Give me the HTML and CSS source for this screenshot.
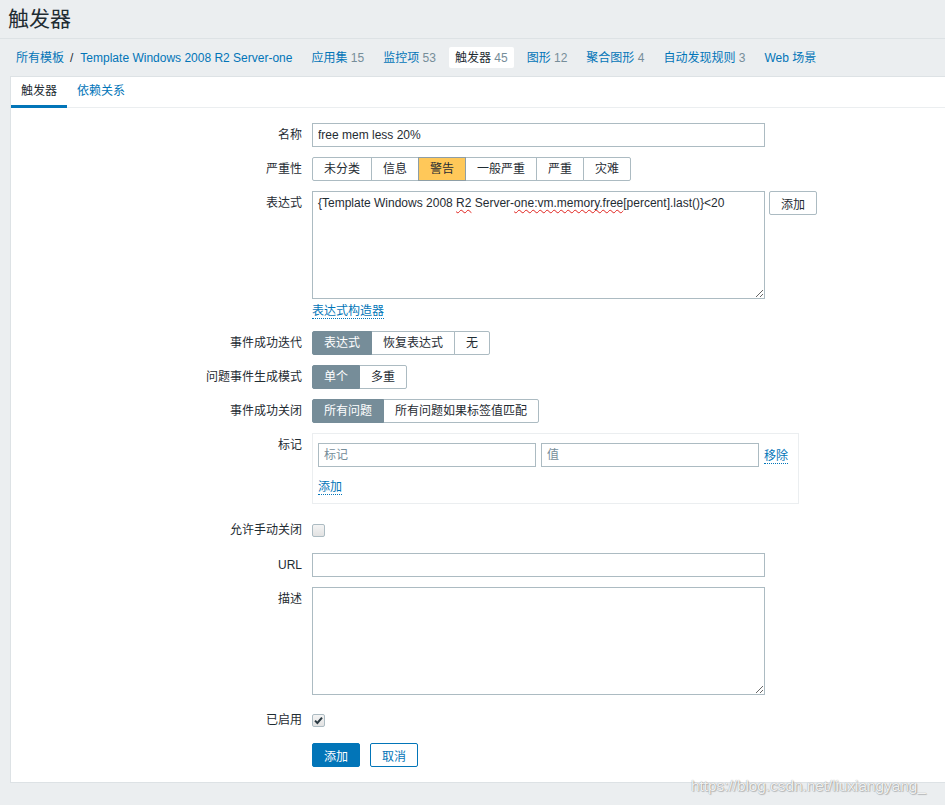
FILE: index.html
```html
<!DOCTYPE html>
<html lang="zh-CN">
<head>
<meta charset="utf-8">
<title>触发器</title>
<link rel="stylesheet" href="styles.css">
</head>
<body>
<header class="page-header"><h1>触发器</h1></header>
<nav class="object-nav">
  <ul class="nav-list">
    <li class="nav-item"><a class="lnk">所有模板</a><span class="sep">/</span><a class="lnk">Template Windows 2008 R2 Server-one</a></li>
    <li class="nav-item"><a class="lnk">应用集</a> <span class="count">15</span></li>
    <li class="nav-item"><a class="lnk">监控项</a> <span class="count">53</span></li>
    <li class="nav-item active"><span class="cur">触发器</span> <span class="count">45</span></li>
    <li class="nav-item"><a class="lnk">图形</a> <span class="count">12</span></li>
    <li class="nav-item"><a class="lnk">聚合图形</a> <span class="count">4</span></li>
    <li class="nav-item"><a class="lnk">自动发现规则</a> <span class="count">3</span></li>
    <li class="nav-item"><a class="lnk">Web 场景</a></li>
  </ul>
</nav>
<main class="panel">
  <div class="tabs">
    <a class="tab active">触发器</a>
    <a class="tab">依赖关系</a>
  </div>
  <form class="form">
    <div class="row">
      <label class="lbl">名称</label>
      <div class="ctl"><input class="field w453" type="text" value="free mem less 20%"></div>
    </div>
    <div class="row">
      <label class="lbl">严重性</label>
      <div class="ctl">
        <div class="radio-group">
          <span class="opt">未分类</span><span class="opt">信息</span><span class="opt warn">警告</span><span class="opt">一般严重</span><span class="opt">严重</span><span class="opt">灾难</span>
        </div>
      </div>
    </div>
    <div class="row">
      <label class="lbl">表达式</label>
      <div class="ctl">
        <div class="expr-line">
          <div class="area w453 h108 expr">{Template Windows 2008 <span class="sp">R2</span> Server-<span class="sp">one:vm.memory.free</span>[percent].last()}&lt;20</div>
          <button class="btn-alt" type="button">添加</button>
        </div>
        <div class="under-link"><a class="dlink">表达式构造器</a></div>
      </div>
    </div>
    <div class="row">
      <label class="lbl">事件成功迭代</label>
      <div class="ctl">
        <div class="radio-group"><span class="opt on">表达式</span><span class="opt">恢复表达式</span><span class="opt">无</span></div>
      </div>
    </div>
    <div class="row">
      <label class="lbl">问题事件生成模式</label>
      <div class="ctl">
        <div class="radio-group"><span class="opt on">单个</span><span class="opt">多重</span></div>
      </div>
    </div>
    <div class="row">
      <label class="lbl">事件成功关闭</label>
      <div class="ctl">
        <div class="radio-group"><span class="opt on">所有问题</span><span class="opt">所有问题如果标签值匹配</span></div>
      </div>
    </div>
    <div class="row">
      <label class="lbl">标记</label>
      <div class="ctl">
        <div class="tag-box">
          <div class="tag-row">
            <input class="field w218" type="text" placeholder="标记">
            <input class="field w218" type="text" placeholder="值">
            <a class="dlink">移除</a>
          </div>
          <div class="tag-add"><a class="dlink">添加</a></div>
        </div>
      </div>
    </div>
    <div class="row row-check">
      <label class="lbl">允许手动关闭</label>
      <div class="ctl ctl-check"><span class="chk"></span></div>
    </div>
    <div class="row">
      <label class="lbl">URL</label>
      <div class="ctl"><input class="field w453" type="text"></div>
    </div>
    <div class="row">
      <label class="lbl">描述</label>
      <div class="ctl"><textarea class="area w453 h108"></textarea></div>
    </div>
    <div class="row row-check row-enabled">
      <label class="lbl">已启用</label>
      <div class="ctl ctl-check"><span class="chk checked"><svg width="11" height="11" viewBox="0 0 11 11"><path d="M2 5.6 L4.4 8 L9 2.6" fill="none" stroke="#2b3a42" stroke-width="2"/></svg></span></div>
    </div>
    <div class="row">
      <span class="lbl"></span>
      <div class="ctl btns">
        <button class="btn-main" type="button">添加</button>
        <button class="btn-cancel" type="button">取消</button>
      </div>
    </div>
  </form>
</main>
<div class="watermark">https://blog.csdn.net/liuxiangyang_</div>
</body>
</html>
```
FILE: styles.css
```css
* { box-sizing: border-box; }
html, body {
  margin: 0;
  padding: 0;
  background: #ebeef0;
  height: 805px;
  overflow: hidden;
}
body {
  font-family: "Liberation Sans", Arial, "Noto Sans CJK SC", sans-serif;
  font-size: 12px;
  color: #1f2c33;
  position: relative;
}
.page-header {
  height: 39px;
  border-bottom: 1px solid #dde2e5;
  display: flex;
  align-items: center;
  padding-left: 8px;
}
.page-header h1 {
  margin: 0;
  font-size: 21px;
  font-weight: normal;
  line-height: 24px;
  color: #1f2c33;
}
.object-nav {
  padding: 8px 10px 8px 10px;
}
.nav-list {
  list-style: none;
  margin: 0;
  padding: 0;
  display: flex;
  gap: 7px;
}
.nav-item {
  height: 21px;
  line-height: 22px;
  padding: 0 6px;
  white-space: nowrap;
  border-radius: 2px;
}
.nav-item.active {
  background: #fff;
}
.lnk { color: #0275b8; text-decoration: none; }
.cur { color: #1f2c33; }
.count { color: #768d99; }
.sep { margin: 0 7px 0 6px; color: #1f2c33; }

.panel {
  margin-left: 10px;
  background: #fff;
  border: 1px solid #dde2e5;
  border-right: none;
}
.tabs {
  display: flex;
  border-bottom: 1px solid #ebeef0;
  height: 31px;
}
.tab {
  padding: 0 10px;
  line-height: 28px;
  height: 31px;
  border-bottom: 3px solid transparent;
  color: #0275b8;
  margin-bottom: -1px;
}
.tab.active {
  color: #1f2c33;
  border-bottom-color: #0275b8;
}

.form {
  padding: 10px 0 10px 0;
}
.row {
  display: grid;
  grid-template-columns: 291px 1fr;
  column-gap: 10px;
  padding: 5px 0;
}
.lbl {
  text-align: right;
  line-height: 24px;
  white-space: nowrap;
}
.ctl { min-width: 0; }

.field {
  height: 24px;
  border: 1px solid #acbbc2;
  padding: 0 5px;
  font: inherit;
  color: #1f2c33;
  background: #fff;
  outline: none;
  margin: 0;
  display: block;
}
.field::placeholder { color: #768d99; opacity: 1; }
.w453 { width: 453px; }
.w218 { width: 218px; }
.h108 { height: 108px; }

.area {
  border: 1px solid #acbbc2;
  padding: 3px 5px;
  font: inherit;
  line-height: 16px;
  color: #1f2c33;
  background: #fff;
  resize: both;
  overflow: auto;
  display: block;
  margin: 0;
  outline: none;
}
.expr { white-space: nowrap; }
.sp {
  text-decoration: underline wavy #e0221d;
  text-decoration-thickness: 1px;
  text-underline-offset: 2px;
  text-decoration-skip-ink: none;
}
.expr-line {
  display: flex;
  align-items: flex-start;
  gap: 4px;
}
.btn-alt {
  height: 24px;
  padding: 0 11px;
  border: 1px solid #acbbc2;
  border-radius: 2px;
  background: #fff;
  font: inherit;
  color: #1f2c33;
  margin: 0;
}
.under-link {
  margin-top: 4px;
  height: 18px;
  line-height: 16px;
}
.dlink {
  color: #0275b8;
  text-decoration: none;
  border-bottom: 1px dotted #0275b8;
}

.radio-group {
  display: inline-flex;
}
.opt {
  height: 24px;
  line-height: 22px;
  padding: 0 11px;
  border: 1px solid #acbbc2;
  margin-left: -1px;
  background: #fff;
  white-space: nowrap;
  position: relative;
}
.opt:first-child { margin-left: 0; border-radius: 2px 0 0 2px; }
.opt:last-child { border-radius: 0 2px 2px 0; }
.opt.warn {
  background: #ffc859;
  border-color: #8e9ea6;
  z-index: 1;
}
.opt.on {
  background: #768d99;
  border-color: #768d99;
  color: #fff;
  z-index: 1;
}

.tag-box {
  width: 487px;
  border: 1px solid #ebeef0;
  padding: 9px 5px 5px 5px;
  margin-bottom: 5px;
}
.tag-row {
  display: flex;
  align-items: center;
  gap: 5px;
}
.tag-add {
  margin-top: 12px;
  line-height: 16px;
  height: 19px;
}

.ctl-check {
  display: flex;
  align-items: center;
  height: 24px;
}
.row-check { padding: 4px 0 6px 0; }
.row-enabled { margin-top: 4px; }
.chk {
  width: 13px;
  height: 13px;
  border: 1px solid #acbbc2;
  border-radius: 2px;
  background: linear-gradient(#f4f4f4, #e2e2e2);
  display: flex;
  align-items: center;
  justify-content: center;
}
.chk svg { display: block; }

.btns {
  display: flex;
  gap: 10px;
}
.btn-main, .btn-cancel {
  height: 24px;
  padding: 0 11px;
  border-radius: 2px;
  font: inherit;
  margin: 0;
}
.btn-main {
  background: #0275b8;
  border: 1px solid #0275b8;
  color: #fff;
}
.btn-cancel {
  background: #fff;
  border: 1px solid #0275b8;
  color: #0275b8;
}

.watermark {
  position: absolute;
  left: 691px;
  top: 777px;
  font-family: "Liberation Sans", Arial, sans-serif;
  font-size: 15.3px;
  line-height: 18px;
  color: rgba(255, 255, 255, 0.9);
  text-shadow: 0 0 1px rgba(0, 0, 0, 0.45), 1px 1px 1px rgba(0, 0, 0, 0.2);
  white-space: nowrap;
}
```
